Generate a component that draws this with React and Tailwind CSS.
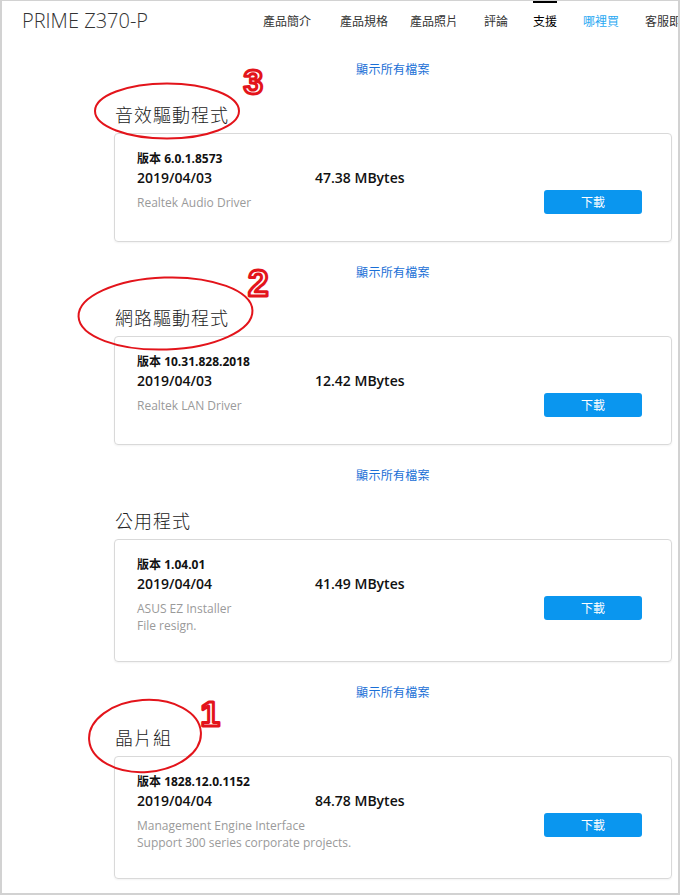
import React from "react";

const navItems = [
  { label: "產品簡介", cls: "ml-0" },
  { label: "產品規格", cls: "ml-[29px]" },
  { label: "產品照片", cls: "ml-[22px]" },
  { label: "評論", cls: "ml-[26px]" },
  { label: "支援", cls: "ml-[25px]", active: true },
  { label: "哪裡買", cls: "ml-[26px]", blue: true },
  { label: "客服即時通", cls: "ml-[26px]" },
];

const sections = [
  {
    title: "音效驅動程式",
    version: "6.0.1.8573",
    date: "2019/04/03",
    size: "47.38 MBytes",
    desc: ["Realtek Audio Driver"],
    first: true,
  },
  {
    title: "網路驅動程式",
    version: "10.31.828.2018",
    date: "2019/04/03",
    size: "12.42 MBytes",
    desc: ["Realtek LAN Driver"],
  },
  {
    title: "公用程式",
    version: "1.04.01",
    date: "2019/04/04",
    size: "41.49 MBytes",
    desc: ["ASUS EZ Installer", "File resign."],
  },
  {
    title: "晶片組",
    version: "1828.12.0.1152",
    date: "2019/04/04",
    size: "84.78 MBytes",
    desc: ["Management Engine Interface", "Support 300 series corporate projects."],
  },
];

function Section({ s }) {
  return (
    <section>
      <div
        className={`${s.first ? "mt-[21px]" : "mt-[22px]"} text-center text-[12px] leading-[16px] tracking-[0.3px] text-[#1a6fd6] font-['Noto_Sans_CJK_TC',sans-serif]`}
      >
        顯示所有檔案
      </div>
      <h2 className="mt-[25px] pl-px text-[18px] leading-[24px] tracking-[1px] font-light text-[#222] font-['Noto_Sans_CJK_TC',sans-serif]">
        {s.title}
      </h2>
      <div className="mt-[7px] min-h-[109px] flex items-start border border-[#d9d9d9] rounded-[4px] pl-[22px] pr-[29px] pt-[15px] pb-[27px] shadow-[0_1px_2px_rgba(0,0,0,0.05)]">
        <div className="flex-1">
          <div className="text-[12px] leading-[18px] font-bold text-[#111]">
            <span className="font-['Noto_Sans_CJK_TC',sans-serif]">版本</span> {s.version}
          </div>
          <div className="flex text-[14px] leading-[20px] font-semibold text-[#111]">
            <span className="w-[178px]">{s.date}</span>
            <span>{s.size}</span>
          </div>
          <div className="mt-[6px] text-[12px] leading-[17px] text-[#9a9a9a]">
            {s.desc.map((d) => (
              <div key={d}>{d}</div>
            ))}
          </div>
        </div>
        <button className="mt-[41px] w-[98px] h-[24px] rounded-[3px] bg-[#0a96ef] text-white text-[12px] flex items-center justify-center font-['Noto_Sans_CJK_TC',sans-serif]">
          下載
        </button>
      </div>
    </section>
  );
}

export default function App() {
  return (
    <div className="relative w-[680px] h-[895px] bg-white border-l-2 border-r-2 border-b-2 border-t border-[#d2d2d2] overflow-hidden font-['Open_Sans','Noto_Sans_CJK_TC',sans-serif]">
      <header className="h-[39px] flex items-center whitespace-nowrap">
        <div className="w-[261px] shrink-0 pl-[20px] text-[20px] font-light text-[#333] leading-[24px]">
          PRIME Z370-P
        </div>
        <nav className="flex h-full text-[12px] text-[#333] font-['Noto_Sans_CJK_TC',sans-serif]">
          {navItems.map((n) => (
            <div
              key={n.label}
              className={`relative flex items-center shrink-0 ${n.cls} ${n.active ? "text-black" : ""} ${n.blue ? "text-[#29a8f2]" : ""}`}
            >
              {n.active && <span className="absolute left-0 right-0 top-0 h-[2px] bg-black" />}
              {n.label}
            </div>
          ))}
        </nav>
      </header>
      <main className="pl-[112px] pr-[6px]">
        {sections.map((s) => (
          <Section key={s.title} s={s} />
        ))}
      </main>
      <svg
        className="absolute left-[-2px] top-[-1px] pointer-events-none"
        width="680"
        height="895"
        viewBox="0 0 680 895"
      >
        <g fill="none" stroke="#e3141b" strokeWidth="2">
          <ellipse cx="167" cy="111" rx="72" ry="27.5" />
          <ellipse cx="165.5" cy="313.5" rx="87" ry="36" transform="rotate(-2 165.5 313.5)" />
          <ellipse cx="145" cy="736" rx="56" ry="36" transform="rotate(-4 145 736)" />
        </g>
        <g
          fill="#fff"
          stroke="#e3141b"
          strokeWidth="3"
          strokeLinejoin="round"
          fontFamily="'Liberation Sans', Arial, sans-serif"
          fontWeight="700"
        >
          <text x="243.5" y="93.5" fontSize="35">3</text>
          <text x="248" y="295.5" fontSize="37">2</text>
          <text x="200.5" y="725.5" fontSize="35">1</text>
        </g>
      </svg>
    </div>
  );
}
